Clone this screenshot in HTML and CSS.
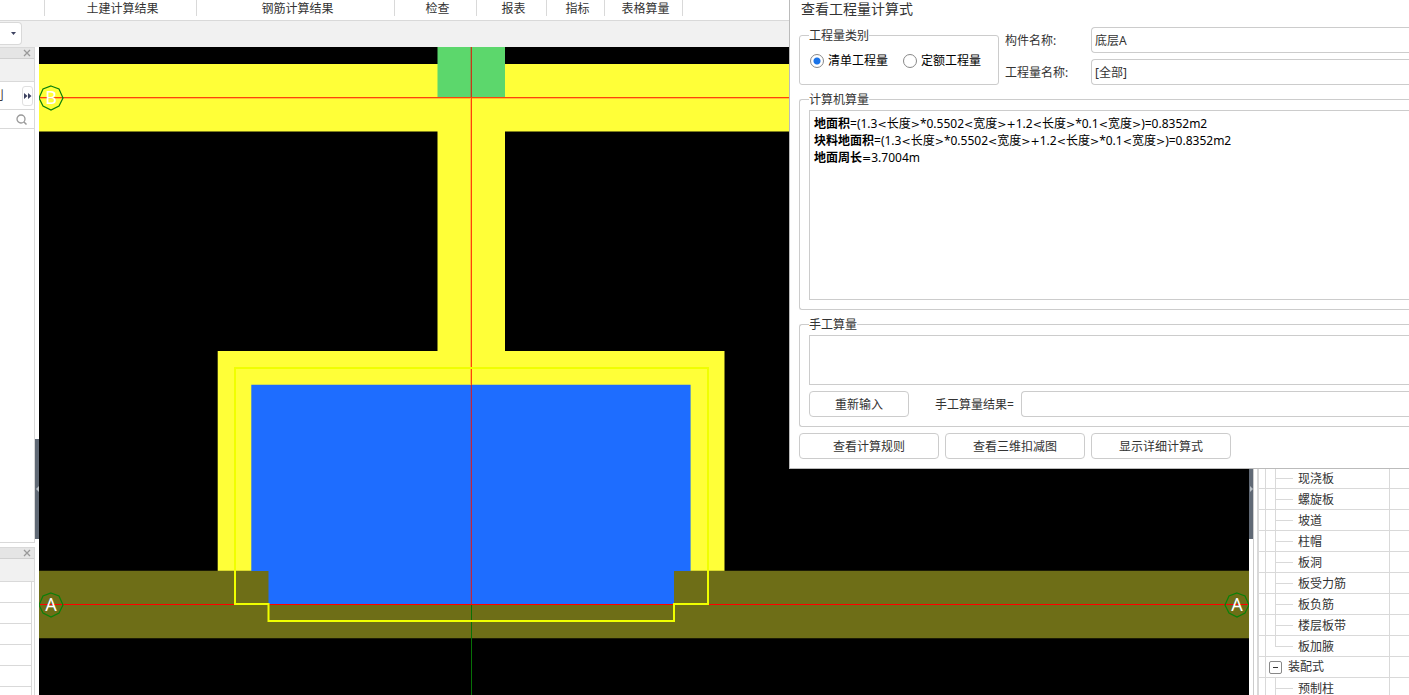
FILE: index.html
```html
<!DOCTYPE html>
<html lang="zh-CN">
<head>
<meta charset="utf-8">
<title>查看工程量计算式</title>
<link rel="stylesheet" href="styles.css">
</head>
<body class="app">
<nav class="ribbon">
  <span class="group w-edge"></span>
  <span class="group w-civil">土建计算结果</span>
  <span class="group w-rebar">钢筋计算结果</span>
  <span class="group w-check">检查</span>
  <span class="group w-report">报表</span>
  <span class="group w-index">指标</span>
  <span class="group w-table">表格算量</span>
</nav>
<div class="toolbar">
  <button class="combo" aria-label="选择楼层"><svg width="6" height="4" viewBox="0 0 6 4"><path d="M0 0h5L2.500 3z" fill="#3d4260"/></svg></button>
</div>
<main class="workspace">
  <aside class="side">
    <section class="panel panel-top">
      <header class="panel-head"><button class="close" aria-label="关闭"><svg width="8" height="8" viewBox="0 0 8 8"><path d="M1 1l6 6M7 1L1 7" stroke="#999" stroke-width="1.300"/></svg></button></header>
      <div class="panel-tools"></div>
      <div class="panel-nav"><span class="cut">刂</span><button class="more" aria-label="更多"><svg width="8" height="6" viewBox="0 0 8 6"><path d="M0 0l3.500 3L0 6zM4 0l3.500 3L4 6z" fill="#3d4260"/></svg></button></div>
      <div class="panel-search"><svg width="11" height="11" viewBox="0 0 11 11"><circle cx="5" cy="5" r="4" fill="none" stroke="#999" stroke-width="1.300"/><path d="M8 8l2.500 2.500" stroke="#999" stroke-width="1.500"/></svg></div>
    </section>
    <section class="panel panel-bottom">
      <header class="panel-head"><button class="close" aria-label="关闭"><svg width="8" height="8" viewBox="0 0 8 8"><path d="M1 1l6 6M7 1L1 7" stroke="#999" stroke-width="1.300"/></svg></button></header>
      <div class="panel-tools"></div>
      <div class="lines"><i></i><i></i><i></i><i></i><i></i><i></i></div>
    </section>
  </aside>
  <div class="splitter"><div class="grip"><svg width="3" height="6" viewBox="0 0 3 6"><path d="M3 0v6L0 3z" fill="#b9c0c6"/></svg></div></div>
  <svg class="drawing" viewBox="39 47 1210 648" preserveAspectRatio="xMinYMin slice" role="img" aria-label="平面图">
    <rect x="39" y="47" width="1210" height="648" fill="#000"/>
    <path d="M39 64h1210v67.500H39zM437.500 131h67.500v220h-67.500zM217.700 351h506.800v220H217.700z" fill="#ffff38"/>
    <path d="M437.500 47h67.500v50h-67.500z" fill="#5cd76c"/>
    <path d="M39 570.700h1210v67.500H39z" fill="#6e6e17"/>
    <path d="M251.300 384.700h439.300v186.300H674v33H268.500v-33h-17.200z" fill="#1e6dff"/>
    <rect x="39" y="97" width="1210" height="1" fill="#ff4308"/>
    <rect x="39" y="98" width="1210" height="1" fill="#ffc030"/>
    <rect x="39" y="604" width="1210" height="1" fill="#f00"/>
    <rect x="471" y="47" width="1" height="50" fill="#c8381a"/>
    <rect x="470" y="47" width="1" height="50" fill="#7ca450"/>
    <rect x="471" y="98" width="1" height="287" fill="#ff4308"/>
    <rect x="470" y="98" width="1" height="287" fill="#ffc030"/>
    <rect x="471" y="385" width="1" height="219" fill="#c0253f"/>
    <rect x="470" y="385" width="1" height="219" fill="#4c5bc8"/>
    <rect x="471" y="605" width="1" height="90" fill="#077007"/>
    <path d="M235 368h473v236h-34v17H268.500v-17H235z" fill="none" stroke="#f0ff00" stroke-width="2"/>
    <g fill="none" stroke="#0a800a" stroke-width="1.200">
      <path id="axis" d="M51 86l8 3 4 9-4 8-8 4-8-4-4-8 4-9z"/>
      <use href="#axis" y="507"/>
      <use href="#axis" x="1186" y="507"/>
    </g>
    <g class="axis-text"><text x="51" y="104">B</text><text x="51" y="611">A</text><text x="1237" y="611">A</text></g>
  </svg>
  <div class="splitter"><div class="grip"><svg width="3" height="6" viewBox="0 0 3 6"><path d="M0 0v6l3-3z" fill="#b9c0c6"/></svg></div></div>
  <aside class="tree">
    <ul class="rows">
      <li class="row child"><span>现浇板</span></li>
      <li class="row child"><span>螺旋板</span></li>
      <li class="row child"><span>坡道</span></li>
      <li class="row child"><span>柱帽</span></li>
      <li class="row child"><span>板洞</span></li>
      <li class="row child"><span>板受力筋</span></li>
      <li class="row child"><span>板负筋</span></li>
      <li class="row child"><span>楼层板带</span></li>
      <li class="row child last"><span>板加腋</span></li>
      <li class="row parent"><button class="toggle" aria-label="折叠"></button><span>装配式</span></li>
      <li class="row child"><span>预制柱</span></li>
    </ul>
  </aside>
</main>
<section class="dialog" role="dialog" aria-labelledby="title">
  <h1 class="title" id="title">查看工程量计算式</h1>
  <div class="top">
    <fieldset class="box kinds">
      <legend>工程量类别</legend>
      <label><input type="radio" name="kind" checked>清单工程量</label>
      <label><input type="radio" name="kind">定额工程量</label>
    </fieldset>
    <div class="fields">
      <label for="part">构件名称:</label><input class="field" id="part" value="底层A">
      <label for="qty">工程量名称:</label><input class="field" id="qty" value="[全部]">
    </div>
  </div>
  <fieldset class="box auto">
    <legend>计算机算量</legend>
    <div class="output">
      <p><b>地面积</b>=(1.3<i>&lt;</i>长度<i>&gt;</i>*0.5502<i>&lt;</i>宽度<i>&gt;+</i>1.2<i>&lt;</i>长度<i>&gt;</i>*0.1<i>&lt;</i>宽度<i>&gt;</i>)=0.8352m2</p>
      <p><b>块料地面积</b>=(1.3<i>&lt;</i>长度<i>&gt;</i>*0.5502<i>&lt;</i>宽度<i>&gt;+</i>1.2<i>&lt;</i>长度<i>&gt;</i>*0.1<i>&lt;</i>宽度<i>&gt;</i>)=0.8352m2</p>
      <p><b>地面周长</b><i>=</i>3.7004m</p>
    </div>
  </fieldset>
  <fieldset class="box manual">
    <legend>手工算量</legend>
    <textarea class="formula" aria-label="手工算量"></textarea>
    <div class="result">
      <button class="btn small">重新输入</button>
      <label for="res">手工算量结果=</label><input class="field" id="res">
    </div>
  </fieldset>
  <div class="actions">
    <button class="btn">查看计算规则</button>
    <button class="btn">查看三维扣减图</button>
    <button class="btn">显示详细计算式</button>
  </div>
</section>
</body>
</html>
```
FILE: styles.css
```css
* { box-sizing: border-box; }
.app, .app button, .app input, .app textarea {
  font-family: "Noto Sans", "Noto Sans CJK SC", sans-serif;
  font-size: 12px;
  color: #333;
}
.app {
  margin: 0;
  height: 100vh;
  overflow: hidden;
  position: relative;
  display: flex;
  flex-direction: column;
  background: #fff;
  line-height: 17px;
}
.ribbon {
  display: flex;
  height: 21px;
  flex: none;
  border-bottom: 1px solid #d9d9d9;
}
.group {
  height: 16px;
  border-right: 1px solid #d9d9d9;
  text-align: center;
  white-space: nowrap;
}
.w-edge { width: 45px; }
.w-civil { width: 152px; padding-left: 4px; }
.w-rebar { width: 198px; padding-left: 4px; }
.w-check { width: 82px; padding-left: 4px; }
.w-report { width: 70px; padding-left: 4px; }
.w-index { width: 58px; padding-left: 4px; }
.w-table { width: 78px; padding-left: 4px; }
.toolbar {
  flex: none;
  height: 26px;
  padding-top: 1px;
  background: #f1f1f1;
}
.combo {
  display: flex;
  align-items: center;
  justify-content: flex-end;
  width: 22px;
  height: 23px;
  padding: 0 4px 0 0;
  border: 1px solid #d9d9d9;
  border-left: 0;
  border-radius: 0 4px 4px 0;
  background: #fff;
}
.workspace { flex: 1; min-height: 0; display: flex; }
.side {
  flex: none;
  width: 35px;
  display: flex;
  flex-direction: column;
  gap: 4px;
}
.panel {
  border: 1px solid #d9d9d9;
  border-left: 0;
  overflow: hidden;
}
.panel-top { flex: 496; }
.panel-bottom { flex: 148; border-bottom: 0; }
.panel-head {
  display: flex;
  justify-content: flex-end;
  align-items: center;
  height: 11px;
  padding-right: 3px;
  background: #e5e5e5;
  border-bottom: 1px solid #d0d0d0;
}
.close { display: flex; border: 0; padding: 0; background: none; }
.panel-tools { height: 23px; background: #f1f1f1; border-bottom: 1px solid #d9d9d9; }
.panel-nav {
  display: flex;
  justify-content: space-between;
  align-items: center;
  height: 28px;
  padding-right: 1px;
  border-bottom: 1px solid #d9d9d9;
}
.cut { width: 4px; overflow: hidden; direction: rtl; white-space: nowrap; }
.more {
  display: flex;
  align-items: center;
  justify-content: center;
  width: 11px;
  height: 20px;
  padding: 0;
  border: 1px solid #e0e0e0;
  border-radius: 3px;
  background: #fff;
}
.panel-search {
  display: flex;
  justify-content: flex-end;
  align-items: center;
  height: 19px;
  padding-right: 7px;
  border-bottom: 1px solid #d9d9d9;
}
.lines { height: 100%; margin-right: 2px; border-right: 1px solid #d9d9d9; }
.lines i { display: block; height: 21px; border-bottom: 1px solid #d9d9d9; }
.splitter { flex: none; width: 4px; padding-top: 392px; }
.grip {
  display: flex;
  align-items: center;
  justify-content: center;
  height: 100px;
  background: #606975;
}
.drawing { flex: 1; min-width: 0; height: 100%; display: block; }
.axis-text {
  fill: #fff;
  font: 18px "Noto Sans", sans-serif;
  text-anchor: middle;
}
.tree {
  flex: none;
  width: 156px;
  padding: 421px 0 0 3px;
  border-left: 1px solid #ccc;
  overflow: hidden;
}
.rows { margin: 0; padding: 0; list-style: none; border-left: 2px solid #d9d9d9; }
.row {
  display: grid;
  grid-template-columns: 7px 10px 1fr 20px;
  grid-template-rows: 20px;
  height: 21px;
  line-height: 22px;
  border-bottom: 1px solid #d9d9d9;
  white-space: nowrap;
  background: linear-gradient(#d9d9d9, #d9d9d9) 130px 0 / 1px 100% no-repeat, linear-gradient(#d9d9d9, #d9d9d9) 6px 0 / 1px 100% no-repeat;
}
.child::before {
  content: "";
  grid-column: 3;
  grid-row: 1;
  width: 17px;
  height: 10px;
  margin-left: -1px;
  border-left: 1px solid #d9d9d9;
  border-bottom: 1px solid #d9d9d9;
}
.child:not(.last)::after {
  content: "";
  grid-column: 3;
  grid-row: 1;
  width: 1px;
  height: 21px;
  margin-left: -1px;
  background: #d9d9d9;
}
.child span { grid-column: 3; grid-row: 1; padding-left: 22px; }
.parent { grid-template-columns: 10px 13px 1fr; align-items: center; }
.toggle {
  grid-column: 2;
  display: flex;
  align-items: center;
  justify-content: center;
  width: 13px;
  height: 13px;
  padding: 0;
  border: 1px solid #888;
  border-radius: 2px;
  background: #fff;
}
.toggle::before { content: ""; width: 5px; height: 1px; background: #333; }
.parent span { padding-left: 6px; }
.dialog {
  position: absolute;
  top: 0;
  left: 789px;
  right: 0;
  padding: 0 0 9px 9px;
  border-left: 1px solid #bbb;
  border-bottom: 1px solid #bbb;
  background: #fff;
}
.title { margin: 0; padding-left: 2px; font-size: 14px; font-weight: 400; line-height: 18px; height: 27px; }
.box {
  min-width: 0;
  margin: 0;
  border: 1px solid #ccc;
  border-radius: 3px;
}
.box legend { padding: 0; line-height: 17px; }
.top { display: flex; gap: 6px; }
.kinds {
  flex: none;
  width: 200px;
  height: 58px;
  padding: 0 8px;
  display: flex;
  gap: 13px;
  color: #000;
}
.kinds legend { color: #333; margin-left: 1px; }
.kinds label { display: flex; align-items: center; gap: 4px; height: 33px; padding-left: 2px; white-space: nowrap; }
.kinds input {
  appearance: none;
  flex: none;
  width: 14px;
  height: 14px;
  margin: 0;
  border: 1px solid #888;
  border-radius: 50%;
  background: #fff;
}
.kinds input:checked { background: radial-gradient(circle, #1a73e8 3px, #fff 4px); }
.fields {
  flex: 1;
  display: grid;
  grid-template-columns: 86px 1fr;
  grid-auto-rows: 26px;
  row-gap: 6px;
  align-items: center;
}
.field {
  min-width: 0;
  width: 100%;
  height: 26px;
  padding: 0 3px;
  border: 1px solid #ccc;
  border-right: 0;
  border-radius: 4px 0 0 4px;
  background: #fff;
}
.auto, .manual { border-right: 0; border-radius: 3px 0 0 3px; padding: 2px 0 9px 9px; }
.auto { margin-top: 6px; }
.manual { margin-top: 6px; }
.output {
  height: 190px;
  padding: 4px;
  border: 1px solid #ccc;
  border-right: 0;
  color: #000;
}
.output p { margin: 0; height: 17px; white-space: nowrap; }
.output i { font: normal 11px "DejaVu Sans", sans-serif; }
.formula {
  display: block;
  width: 100%;
  height: 50px;
  border: 1px solid #ccc;
  border-right: 0;
  resize: none;
}
.result { display: flex; align-items: center; margin-top: 6px; }
.result label { flex: none; width: 86px; margin-left: 26px; white-space: nowrap; }
.btn {
  width: 140px;
  height: 26px;
  padding: 0;
  border: 1px solid #ccc;
  border-radius: 4px;
  background: #fff;
}
.small { flex: none; width: 100px; }
.actions { display: flex; gap: 6px; margin-top: 6px; }
```
